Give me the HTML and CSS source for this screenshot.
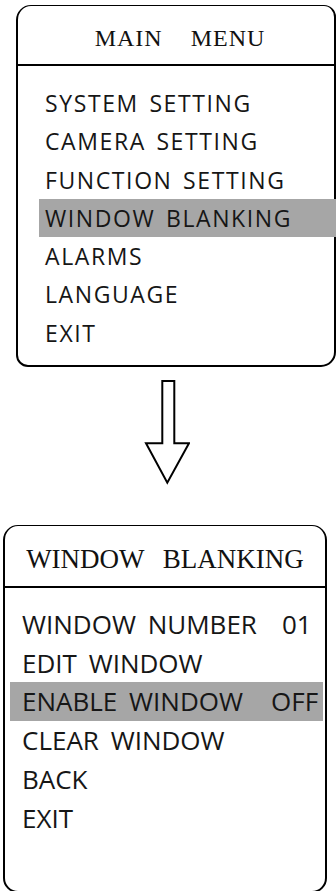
FILE: index.html
```html
<!DOCTYPE html>
<html lang="en">

<head>
  <meta charset="UTF-8">
  <meta name="viewport" content="width=device-width, initial-scale=1.0">
  <title>Window Blanking</title>
  <link rel="stylesheet" href="styles.css">
</head>

<body>
  <!-- Main menu screen -->
  <section class="osd osd-main">
    <h2 class="osd-title">MAIN MENU</h2>
    <ul class="osd-list">
      <li>SYSTEM SETTING</li>
      <li>CAMERA SETTING</li>
      <li>FUNCTION SETTING</li>
      <li class="active">WINDOW BLANKING</li>
      <li>ALARMS</li>
      <li>LANGUAGE</li>
      <li>EXIT</li>
    </ul>
  </section>

  <svg class="arrow" width="46" height="106" viewBox="0 0 46 106">
    <polygon points="18.3,2 30.3,2 30.3,64.3 45,64.3 23.3,103.7 2,64.3 18.3,64.3"
      fill="#fff" stroke="#000" stroke-width="2" stroke-linejoin="miter" />
  </svg>

  <!-- Window blanking sub menu -->
  <section class="osd osd-sub">
    <h2 class="osd-title">WINDOW BLANKING</h2>
    <ul class="osd-list">
      <li>WINDOW NUMBER<span class="val">01</span></li>
      <li>EDIT WINDOW</li>
      <li class="active">ENABLE WINDOW<span class="val val-off">OFF</span></li>
      <li>CLEAR WINDOW</li>
      <li>BACK</li>
      <li>EXIT</li>
    </ul>
  </section>
</body>

</html>
```

FILE: styles.css
```css
/* Basic reset */
html,
body {
  overflow: hidden;
}

body {
  margin: 0;
  background-color: #ffffff;
  color: #161616;
  font-family: 'Open Sans', 'Noto Sans', sans-serif;
}

/* OSD menu box */
.osd {
  box-sizing: border-box;
  border: 2px solid #000;
  border-top-width: 1px;
}

.osd-title {
  box-sizing: border-box;
  margin: 0;
  border-bottom: 2px solid #000;
  font-family: 'Liberation Serif', 'Times New Roman', serif;
  font-weight: normal;
  text-align: center;
  color: #111;
}

.osd-list {
  list-style: none;
  margin: 0;
}

.osd-list li {
  white-space: nowrap;
}

.osd-list li.active {
  background-color: #a6a6a6;
}

/* Top screen */
.osd-main {
  margin: 5px 0 0 16px;
  width: 320px;
  height: 362px;
  border-radius: 15px 12px 15px 12px;
}

.osd-main .osd-title {
  height: 60px;
  padding: 20px 0 0 8px;
  font-size: 24px;
  line-height: 24px;
  letter-spacing: 1px;
  word-spacing: 21px;
}

.osd-main .osd-list {
  padding: 18px 0 0 21px;
  margin-right: -2px;
  font-size: 23px;
  line-height: 38.3px;
  letter-spacing: 1.6px;
  word-spacing: 3px;
}

.osd-main .osd-list li {
  padding-left: 6px;
}

/* Arrow between screens */
.arrow {
  display: block;
  margin: 12px 0 0 144px;
}

/* Bottom screen */
.osd-sub {
  margin: 40px 0 0 3px;
  width: 324px;
  height: 368px;
  border-radius: 15px;
}

.osd-sub .osd-title {
  height: 62px;
  padding-top: 20px;
  font-size: 27px;
  line-height: 27px;
  word-spacing: 12px;
}

.osd-sub .osd-list {
  padding: 17px 2px 0 5px;
  font-size: 26px;
  line-height: 38.7px;
  word-spacing: 5px;
}

.osd-sub .osd-list li {
  padding-left: 12px;
}

.val {
  margin-left: 25px;
}

.val-off {
  margin-left: 28px;
}
```
